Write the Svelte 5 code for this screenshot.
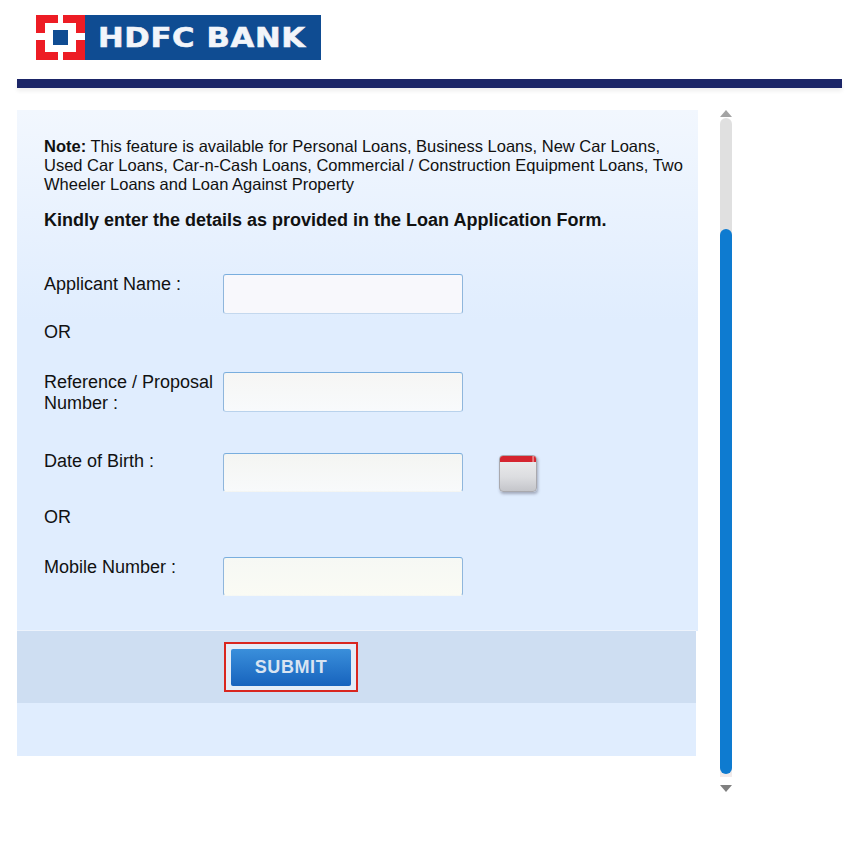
<script lang="ts">
  interface Field {
    label: string;
    calendar?: boolean;
    or?: boolean;
  }

  const fields: Field[] = [
    { label: "Applicant Name :", or: true },
    { label: "Reference / Proposal Number :" },
    { label: "Date of Birth :", calendar: true, or: true },
    { label: "Mobile Number :" },
  ];
</script>

<div class="page">
  <header class="brand">
    <div class="logo">
      <div class="mark">
        <svg width="49" height="45" viewBox="0 0 49 45" aria-hidden="true">
          <rect width="49" height="45" fill="#ed1c24" />
          <rect x="9" y="8" width="31" height="29" fill="#fff" />
          <rect x="22" y="0" width="5" height="8" fill="#fff" />
          <rect x="22" y="37" width="5" height="8" fill="#fff" />
          <rect x="0" y="18" width="9" height="7" fill="#fff" />
          <rect x="40" y="18" width="9" height="7" fill="#fff" />
          <rect x="17" y="15" width="15" height="15" fill="#0f4c92" />
        </svg>
      </div>
      <span class="wordmark">HDFC BANK</span>
    </div>
  </header>
  <div class="rule"></div>

  <div class="content">
    <main class="panel">
      <div class="intro">
        <p class="note">
          <b>Note:</b> This feature is available for Personal Loans, Business Loans, New Car Loans,
          Used Car Loans, Car-n-Cash Loans, Commercial / Construction Equipment Loans, Two
          Wheeler Loans and Loan Against Property
        </p>
        <p class="kindly">Kindly enter the details as provided in the Loan Application Form.</p>
      </div>

      <form class="fields" onsubmit={(e) => e.preventDefault()}>
        {#each fields as field, i}
          <div class="row row-{i}">
            <label for="field-{i}">{field.label}</label>
            <input id="field-{i}" class="input-{i}" type="text" />
            {#if field.calendar}
              <button class="calendar" type="button" aria-label="Open calendar">
                <span class="calendar-top"></span>
              </button>
            {/if}
          </div>
          {#if field.or}
            <div class="or">OR</div>
          {/if}
        {/each}
      </form>

      <div class="actions">
        <div class="submit-ring">
          <button class="submit" type="button">SUBMIT</button>
        </div>
      </div>
      <div class="panel-end"></div>
    </main>

    <div class="scrollbar" aria-hidden="true">
      <span class="arrow up"></span>
      <div class="track">
        <div class="thumb"></div>
      </div>
      <span class="arrow down"></span>
    </div>
  </div>
</div>

<style>
  :global(body) {
    margin: 0;
    background: #fff;
    font-family: "Liberation Sans", Arial, sans-serif;
    color: #111;
  }

  .page {
    width: 864px;
    height: 846px;
    overflow: hidden;
  }

  .brand {
    padding: 15px 0 19px 36px;
  }

  .logo {
    display: flex;
    width: 285px;
    height: 45px;
    overflow: hidden;
    background: #0f4c92;
  }

  .mark {
    display: flex;
    height: 45px;
  }

  .wordmark {
    margin-left: 13px;
    color: #f2f5fa;
    font-family: "DejaVu Sans", sans-serif;
    font-size: 27px;
    font-weight: 700;
    line-height: 45px;
    letter-spacing: 0.6px;
    white-space: nowrap;
    transform: scaleX(1.135);
    transform-origin: left center;
    -webkit-text-stroke: 0.6px #f2f5fa;
  }

  .rule {
    width: 825px;
    height: 9px;
    margin-left: 17px;
    background: #1b2567;
    box-shadow: 0 3px 4px rgba(0, 0, 0, 0.07);
  }

  .content {
    display: flex;
    align-items: flex-start;
    margin: 22px 0 0 17px;
  }

  .panel {
    width: 681px;
    height: 646px;
    background: linear-gradient(180deg, #f2f7fe 0, #e0edfe 210px, #e0edfe 100%) no-repeat;
    background-size: 100% 521px;
  }

  .intro {
    height: 164px;
    padding: 27px 10px 0 27px;
    box-sizing: border-box;
  }

  .note {
    margin: 0;
    width: 642px;
    font-size: 16.5px;
    line-height: 19px;
  }

  .kindly {
    margin: 16px 0 0;
    font-size: 18px;
    font-weight: 700;
    line-height: 21px;
    white-space: nowrap;
  }

  .fields {
    display: flex;
    flex-direction: column;
    height: 356px;
    box-sizing: border-box;
    padding-left: 27px;
    font-size: 18px;
  }

  .row {
    display: flex;
    align-items: flex-start;
  }

  .row label {
    width: 179px;
    flex: none;
    font-size: 18px;
    line-height: 21px;
  }

  .row input {
    width: 240px;
    height: 40px;
    flex: none;
    box-sizing: border-box;
    border: 1px solid #8fb6dc;
    border-top-color: #79aede;
    border-bottom-color: #c4d8ee;
    border-radius: 3px;
    background: #f8f8fc;
    outline: none;
  }

  .input-1 {
    background: linear-gradient(180deg, #f6f6f4, #f8fafc) !important;
    border-bottom-color: #b9d2ec !important;
  }

  .input-2 {
    height: 39px !important;
    background: linear-gradient(180deg, #f4f5f2, #f8fafb) !important;
    border-bottom-color: transparent !important;
  }

  .input-3 {
    height: 39px !important;
    background: linear-gradient(180deg, #f6f8f4, #fafbf4) !important;
    border-bottom-color: transparent !important;
  }

  .row-1 {
    margin-top: 29px;
  }

  .row-2 {
    margin-top: 39px;
  }

  .row-2 label {
    margin-top: -2px;
  }

  .row-3 {
    margin-top: 29px;
  }

  .or {
    margin-top: 8px;
    line-height: 21px;
  }

  .row-2 + .or {
    margin-top: 15px;
  }

  .calendar {
    display: flex;
    flex-direction: column;
    width: 38px;
    height: 37px;
    margin: 2px 0 0 36px;
    padding: 0;
    overflow: hidden;
    border: 1px solid #a9a9ae;
    border-radius: 4px;
    background: linear-gradient(180deg, #eeeeef, #dcdde0 60%, #c4c5ca);
    box-shadow: 1px 2px 3px rgba(70, 70, 90, 0.4);
  }

  .calendar-top {
    display: block;
    width: 100%;
    height: 6px;
    flex: none;
    background: linear-gradient(90deg, #d5242e 88%, #f0a0a0 92%, #d5242e 96%);
  }

  .actions {
    display: flex;
    align-items: flex-start;
    height: 73px;
    box-sizing: border-box;
    margin-right: 2px;
    padding: 11px 0 0 207px;
    border-top: 1px solid #edf3fc;
    background: #cedef2;
  }

  .submit-ring {
    padding: 5px 5px 4px;
    border: 2px solid #d9261f;
    background: #e4edf8;
    line-height: 0;
  }

  .submit {
    width: 120px;
    height: 37px;
    padding: 0;
    border: none;
    border-radius: 2px;
    background: linear-gradient(180deg, #3a8fdb, #1763bd);
    color: #d8e4f2;
    font-family: inherit;
    font-size: 18px;
    font-weight: 700;
    line-height: 37px;
    letter-spacing: 0.6px;
  }

  .panel-end {
    height: 53px;
    margin-right: 2px;
    background: #e0edfe;
  }

  .scrollbar {
    display: flex;
    flex-direction: column;
    align-items: center;
    width: 12px;
    margin-left: 22px;
  }

  .arrow {
    width: 0;
    height: 0;
    border-left: 6px solid transparent;
    border-right: 6px solid transparent;
  }

  .arrow.up {
    border-bottom: 7px solid #a3a3a3;
    margin-bottom: 1px;
  }

  .arrow.down {
    border-top: 7px solid #808080;
    margin-top: 8px;
  }

  .track {
    width: 12px;
    height: 659px;
    border-radius: 6px 6px 0 0;
    background: linear-gradient(180deg, #e0e0e0 0, #e0e0e0 640px, #f3ecec 100%);
  }

  .thumb {
    width: 12px;
    height: 545px;
    margin-top: 111px;
    border-radius: 6px;
    background: #0e7bd0;
  }
</style>
